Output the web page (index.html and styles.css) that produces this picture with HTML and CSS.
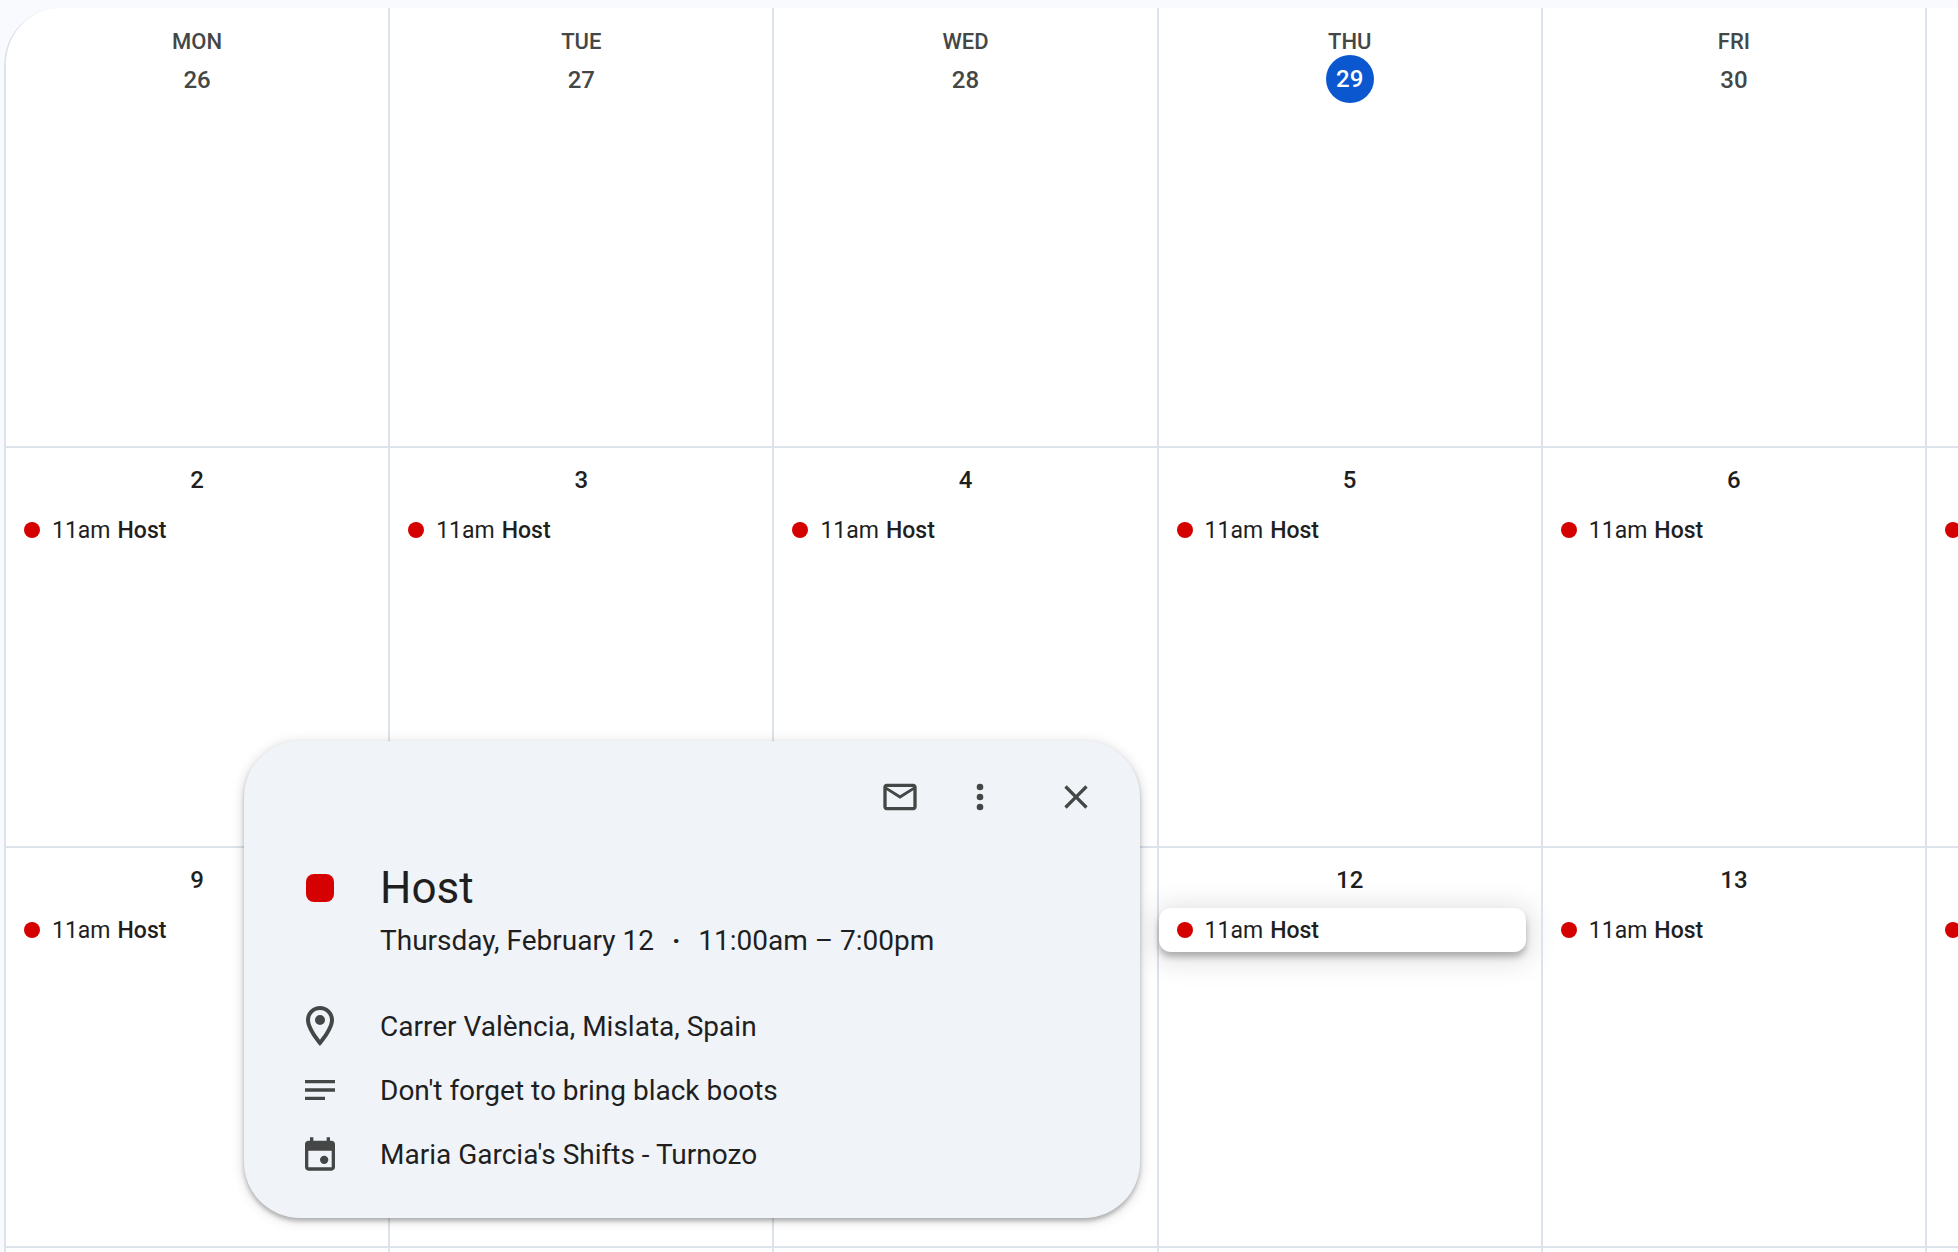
FILE: index.html
```
<!DOCTYPE html>
<html lang="en">
<head>
  <meta charset="utf-8">
  <title>Calendar</title>
  <link rel="stylesheet" href="styles.css">
</head>
<body>
  <main class="month">
    <div class="day other"><span class="weekday">MON</span><span class="date">26</span></div>
    <div class="day other"><span class="weekday">TUE</span><span class="date">27</span></div>
    <div class="day other"><span class="weekday">WED</span><span class="date">28</span></div>
    <div class="day other"><span class="weekday">THU</span><span class="date today">29</span></div>
    <div class="day other"><span class="weekday">FRI</span><span class="date">30</span></div>
    <div class="day"></div>

    <div class="day"><span class="date">2</span><button class="event"><i class="dot"></i>11am <b>Host</b></button></div>
    <div class="day"><span class="date">3</span><button class="event"><i class="dot"></i>11am <b>Host</b></button></div>
    <div class="day"><span class="date">4</span><button class="event"><i class="dot"></i>11am <b>Host</b></button></div>
    <div class="day"><span class="date">5</span><button class="event"><i class="dot"></i>11am <b>Host</b></button></div>
    <div class="day"><span class="date">6</span><button class="event"><i class="dot"></i>11am <b>Host</b></button></div>
    <div class="day"><span class="date"></span><button class="event" aria-label="Host"><i class="dot"></i></button></div>

    <div class="day"><span class="date">9</span><button class="event"><i class="dot"></i>11am <b>Host</b></button></div>
    <div class="day"></div>
    <div class="day"></div>
    <div class="day"><span class="date">12</span><button class="event selected"><i class="dot"></i>11am <b>Host</b></button></div>
    <div class="day"><span class="date">13</span><button class="event"><i class="dot"></i>11am <b>Host</b></button></div>
    <div class="day"><span class="date"></span><button class="event" aria-label="Host"><i class="dot"></i></button></div>

    <div class="day"></div>
    <div class="day"></div>
    <div class="day"></div>
    <div class="day"></div>
    <div class="day"></div>
    <div class="day"></div>
  </main>

  <section class="popover" role="dialog" aria-labelledby="event-title">
    <div class="toolbar">
      <button class="icon-button" aria-label="Email guests">
        <svg class="icon" viewBox="0 0 24 24"><path d="M22 6c0-1.1-.9-2-2-2H4c-1.1 0-2 .9-2 2v12c0 1.1.9 2 2 2h16c1.1 0 2-.9 2-2V6zm-2 0l-8 5-8-5h16zm0 12H4V8l8 5 8-5v10z"/></svg>
      </button>
      <button class="icon-button" aria-label="Options">
        <svg class="icon" viewBox="0 0 24 24"><circle cx="12" cy="6" r="2"/><circle cx="12" cy="12" r="2"/><circle cx="12" cy="18" r="2"/></svg>
      </button>
      <button class="icon-button close" aria-label="Close">
        <svg class="icon" viewBox="0 0 24 24"><path d="M19 6.41L17.59 5 12 10.59 6.41 5 5 6.41 10.59 12 5 17.59 6.41 19 12 13.41 17.59 19 19 17.59 13.41 12z"/></svg>
      </button>
    </div>

    <div class="row heading">
      <span class="row-icon"><i class="color"></i></span>
      <h1 id="event-title">Host</h1>
    </div>
    <p class="when"><span>Thursday, February 12</span><b>·</b><span>11:00am – 7:00pm</span></p>

    <div class="row">
      <span class="row-icon">
        <svg class="icon large" viewBox="0 0 24 24"><path d="M12 2C8.13 2 5 5.13 5 9c0 5.25 7 13 7 13s7-7.75 7-13c0-3.87-3.13-7-7-7zM7 9c0-2.76 2.24-5 5-5s5 2.24 5 5c0 2.88-2.88 7.19-5 9.88C9.92 16.21 7 11.85 7 9z"/><circle cx="12" cy="9" r="2.5"/></svg>
      </span>
      <span>Carrer València, Mislata, Spain</span>
    </div>
    <div class="row">
      <span class="row-icon">
        <svg class="icon" viewBox="0 0 24 24"><path d="M3 18h12v-2H3v2zM3 6v2h18V6H3zm0 7h18v-2H3v2z"/></svg>
      </span>
      <span>Don't forget to bring black boots</span>
    </div>
    <div class="row">
      <span class="row-icon">
        <svg class="icon" viewBox="0 0 24 24"><path d="M19 4h-1V2h-2v2H8V2H6v2H5c-1.1 0-2 .9-2 2v14c0 1.1.9 2 2 2h14c1.1 0 2-.9 2-2V6c0-1.1-.9-2-2-2zm0 16H5V10h14v10z"/><circle cx="14.5" cy="15.5" r="2.5"/></svg>
      </span>
      <span>Maria Garcia's Shifts - Turnozo</span>
    </div>
  </section>
</body>
</html>
```
FILE: styles.css
```
* {
  box-sizing: border-box;
}

body {
  margin: 0;
  padding: 8px 0 0 4px;
  height: 100vh;
  overflow: hidden;
  background: #f8fafd;
  color: #1f1f1f;
  font-family: Roboto, "Liberation Sans", sans-serif;
}

button {
  border: 0;
  padding: 0;
  background: none;
  color: inherit;
  font: inherit;
  cursor: pointer;
}

/* Month grid, the last column runs off the edge */
.month {
  display: grid;
  grid-template-columns: repeat(5, minmax(0, 1fr)) 33px;
  grid-template-rows: 438fr 400fr 400fr 6px;
  height: 100%;
  overflow: hidden;
  background: #fff;
  border-top-left-radius: 56px;
}

.day {
  display: flex;
  flex-direction: column;
  align-items: center;
  min-width: 0;
  padding-top: 7px;
  border-left: 2px solid #dde3ea;
  border-top: 2px solid #dde3ea;
}

.day:nth-child(-n+6) {
  border-top: 0;
}

.day:first-child {
  border-top-left-radius: 56px;
}

.day:nth-last-child(-n+6) {
  padding-top: 0;
}

.weekday {
  padding-top: 15px;
  margin-bottom: 1px;
  font-size: 22px;
  font-weight: 500;
  line-height: 24px;
}

.date {
  width: 48px;
  height: 48px;
  font-size: 24px;
  font-weight: 500;
  line-height: 50px;
  text-align: center;
}

.other {
  color: #444746;
}

.today {
  border-radius: 50%;
  background: #0b57d0;
  color: #fff;
  line-height: 48px;
}

.event {
  display: flex;
  align-items: center;
  align-self: stretch;
  gap: 7px;
  height: 44px;
  margin: 5px 15px 0 0;
  padding-left: 18px;
  border-radius: 12px;
  font-size: 23px;
  white-space: nowrap;
}

.event b {
  font-weight: 500;
}

.dot {
  flex: none;
  width: 16px;
  height: 16px;
  margin-right: 5px;
  border-radius: 50%;
  background: #d50000;
}

.selected {
  background: #fff;
  box-shadow: 0 5px 6px rgba(0, 0, 0, .25), 0 4px 28px 6px rgba(0, 0, 0, .12);
}

/* Event details */
.popover {
  position: absolute;
  top: 741px;
  left: 244px;
  width: 896px;
  padding: 24px 32px 32px 44px;
  border-radius: 56px;
  background: #f0f4f9;
  box-shadow: 0 3px 4px rgba(0, 0, 0, .25), 0 2px 12px 2px rgba(0, 0, 0, .12);
  font-size: 28px;
}

.toolbar {
  display: flex;
  justify-content: flex-end;
  gap: 16px;
}

.icon-button {
  display: flex;
  align-items: center;
  justify-content: center;
  width: 64px;
  height: 64px;
  border-radius: 50%;
}

.close {
  margin-left: 16px;
}

.icon {
  display: block;
  width: 40px;
  height: 40px;
  fill: #444746;
}

.large {
  width: 48px;
  height: 48px;
}

.row {
  display: flex;
  align-items: center;
  gap: 28px;
  height: 64px;
}

.row-icon {
  display: flex;
  justify-content: center;
  width: 64px;
}

.heading {
  height: 56px;
  margin-top: 31px;
}

.color {
  width: 28px;
  height: 28px;
  border-radius: 8px;
  background: #d50000;
}

h1 {
  margin: 0;
  font-size: 44px;
  font-weight: 400;
  line-height: 56px;
}

.when {
  display: flex;
  gap: 18px;
  margin: 4px 0 32px;
  padding-left: 92px;
  line-height: 42px;
}
```
